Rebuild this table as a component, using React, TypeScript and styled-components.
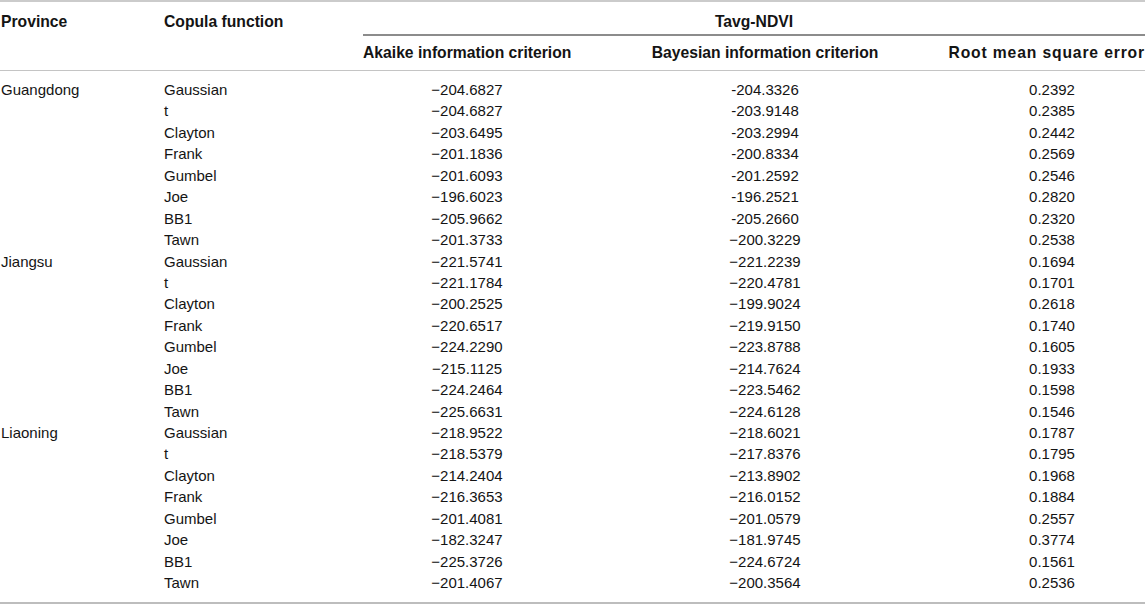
import React from "react";
import styled, { createGlobalStyle } from "styled-components";

const GlobalStyle = createGlobalStyle`
  html, body {
    margin: 0;
    padding: 0;
    background: #ffffff;
  }
  body {
    font-family: "Liberation Sans", Arial, Helvetica, sans-serif;
    color: #141414;
  }
`;

const Table = styled.table`
  width: 1145px;
  table-layout: fixed;
  border-collapse: separate;
  border-spacing: 0;
  border-top: 2px solid #cbcbcb;
  border-bottom: 2px solid #bdbdbd;
  font-size: 15px;
`;

type Align = "left" | "center" | "right";

const HeadCell = styled.th<{ $align?: Align; $row: 1 | 2; $group?: boolean }>`
  font-weight: 700;
  font-size: 15.7px;
  line-height: 16px;
  white-space: nowrap;
  text-align: ${(p) => p.$align ?? "center"};
  vertical-align: top;
  padding: ${(p) => (p.$row === 1 ? "12px 0 4px" : "9px 0 9px")};
  padding-left: ${(p) => (p.$align === "left" ? "1px" : "0")};
  border-bottom: ${(p) => (p.$group ? "2px solid #8c8c8c" : "1px solid #c4c4c4")};
`;

const EdgeLabel = styled.div`
  display: flex;
  justify-content: flex-end;
  letter-spacing: 0.85px;
  white-space: nowrap;
`;

const Cell = styled.td<{ $align?: Align; $first?: boolean; $last?: boolean }>`
  padding: 0;
  padding-left: ${(p) => (p.$align === "left" ? "1px" : "0")};
  padding-top: ${(p) => (p.$first ? "8px" : "0")};
  padding-bottom: ${(p) => (p.$last ? "8px" : "0")};
  height: 21.43px;
  line-height: 21.43px;
  white-space: nowrap;
  text-align: ${(p) => p.$align ?? "center"};
  vertical-align: top;
`;

type Row = [string, string, string, string];

const data: { province: string; rows: Row[] }[] = [
  {
    province: "Guangdong",
    rows: [
      ["Gaussian", "\u2212204.6827", "-204.3326", "0.2392"],
      ["t", "\u2212204.6827", "-203.9148", "0.2385"],
      ["Clayton", "\u2212203.6495", "-203.2994", "0.2442"],
      ["Frank", "\u2212201.1836", "-200.8334", "0.2569"],
      ["Gumbel", "\u2212201.6093", "-201.2592", "0.2546"],
      ["Joe", "\u2212196.6023", "-196.2521", "0.2820"],
      ["BB1", "\u2212205.9662", "-205.2660", "0.2320"],
      ["Tawn", "\u2212201.3733", "\u2212200.3229", "0.2538"],
    ],
  },
  {
    province: "Jiangsu",
    rows: [
      ["Gaussian", "\u2212221.5741", "\u2212221.2239", "0.1694"],
      ["t", "\u2212221.1784", "\u2212220.4781", "0.1701"],
      ["Clayton", "\u2212200.2525", "\u2212199.9024", "0.2618"],
      ["Frank", "\u2212220.6517", "\u2212219.9150", "0.1740"],
      ["Gumbel", "\u2212224.2290", "\u2212223.8788", "0.1605"],
      ["Joe", "\u2212215.1125", "\u2212214.7624", "0.1933"],
      ["BB1", "\u2212224.2464", "\u2212223.5462", "0.1598"],
      ["Tawn", "\u2212225.6631", "\u2212224.6128", "0.1546"],
    ],
  },
  {
    province: "Liaoning",
    rows: [
      ["Gaussian", "\u2212218.9522", "\u2212218.6021", "0.1787"],
      ["t", "\u2212218.5379", "\u2212217.8376", "0.1795"],
      ["Clayton", "\u2212214.2404", "\u2212213.8902", "0.1968"],
      ["Frank", "\u2212216.3653", "\u2212216.0152", "0.1884"],
      ["Gumbel", "\u2212201.4081", "\u2212201.0579", "0.2557"],
      ["Joe", "\u2212182.3247", "\u2212181.9745", "0.3774"],
      ["BB1", "\u2212225.3726", "\u2212224.6724", "0.1561"],
      ["Tawn", "\u2212201.4067", "\u2212200.3564", "0.2536"],
    ],
  },
];

export default function App() {
  const total = data.reduce((n, g) => n + g.rows.length, 0);
  let idx = 0;
  return (
    <>
      <GlobalStyle />
      <Table>
        <colgroup>
          <col style={{ width: 163 }} />
          <col style={{ width: 200 }} />
          <col style={{ width: 208 }} />
          <col style={{ width: 388 }} />
          <col style={{ width: 186 }} />
        </colgroup>
        <thead>
          <tr>
            <HeadCell $row={1} $align="left" rowSpan={2}>Province</HeadCell>
            <HeadCell $row={1} $align="left" rowSpan={2}>Copula function</HeadCell>
            <HeadCell $row={1} $group colSpan={3}>Tavg-NDVI</HeadCell>
          </tr>
          <tr>
            <HeadCell $row={2}>Akaike information criterion</HeadCell>
            <HeadCell $row={2}>Bayesian information criterion</HeadCell>
            <HeadCell $row={2}>
              <EdgeLabel>Root mean square error</EdgeLabel>
            </HeadCell>
          </tr>
        </thead>
        <tbody>
          {data.map((g) =>
            g.rows.map((r, i) => {
              const first = idx === 0;
              const last = idx === total - 1;
              idx += 1;
              return (
                <tr key={g.province + i}>
                  <Cell $align="left" $first={first} $last={last}>{i === 0 ? g.province : ""}</Cell>
                  <Cell $align="left" $first={first} $last={last}>{r[0]}</Cell>
                  <Cell $first={first} $last={last}>{r[1]}</Cell>
                  <Cell $first={first} $last={last}>{r[2]}</Cell>
                  <Cell $first={first} $last={last}>{r[3]}</Cell>
                </tr>
              );
            })
          )}
        </tbody>
      </Table>
    </>
  );
}
